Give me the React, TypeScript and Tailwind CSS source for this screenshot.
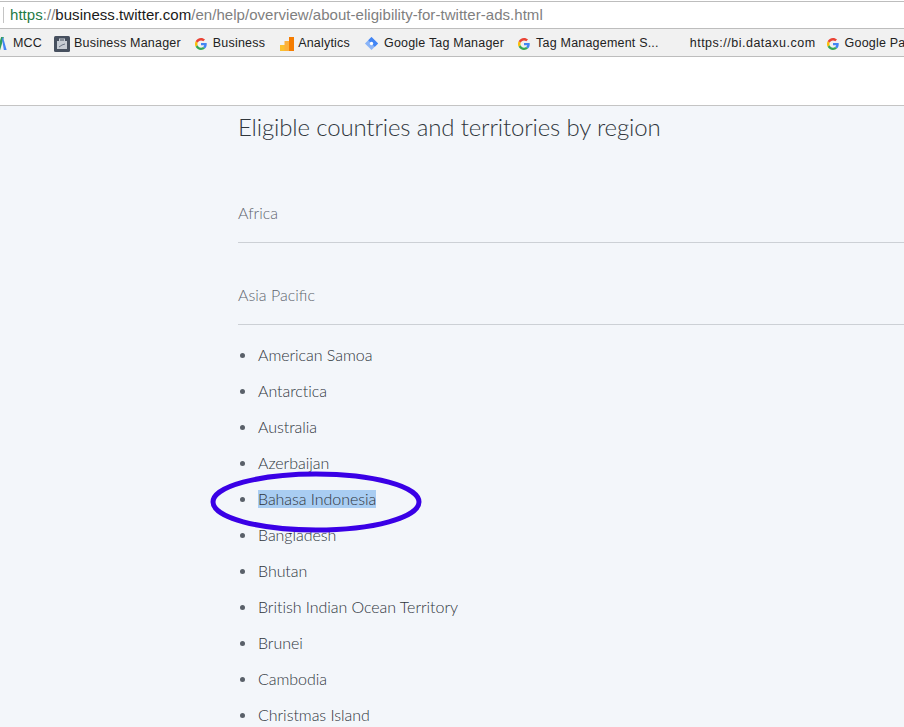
import React from "react";

const sans = "font-['Liberation_Sans',Arial,sans-serif]";

const countries = [
  "American Samoa",
  "Antarctica",
  "Australia",
  "Azerbaijan",
  "Bahasa Indonesia",
  "Bangladesh",
  "Bhutan",
  "British Indian Ocean Territory",
  "Brunei",
  "Cambodia",
  "Christmas Island",
];

function GoogleIcon() {
  return (
    <svg viewBox="0 0 48 48" className="w-[12px] h-[12px] shrink-0">
      <path fill="#EA4335" d="M24 9.5c3.5 0 6.700 1.200 9.200 3.600l6.900-6.900C35.900 2.400 30.500 0 24 0 14.600 0 6.500 5.400 2.600 13.200l8 6.200C12.500 13.600 17.800 9.500 24 9.500z" />
      <path fill="#4285F4" d="M46.900 24.500c0-1.600-.1-3.100-.4-4.500H24v9h12.900c-.6 3-2.200 5.500-4.700 7.200l7.700 6c4.500-4.200 7-10.300 7-17.700z" />
      <path fill="#FBBC05" d="M10.500 28.600c-.5-1.400-.8-3-.8-4.600s.3-3.200.8-4.600l-8-6.200C.9 16.500 0 20.100 0 24s.9 7.500 2.600 10.800l7.900-6.200z" />
      <path fill="#34A853" d="M24 48c6.500 0 11.900-2.100 15.900-5.800l-7.700-6c-2.100 1.400-4.900 2.300-8.200 2.300-6.200 0-11.500-4.200-13.400-9.800l-8 6.200C6.500 42.600 14.600 48 24 48z" />
    </svg>
  );
}

function Bookmark({ icon, label, className }: { icon?: React.ReactNode; label: string; className: string }) {
  return (
    <div className={`flex items-center shrink-0 ${className}`}>
      {icon}
      <span className="whitespace-nowrap">{label}</span>
    </div>
  );
}

export default function App() {
  return (
    <div className="w-[904px] h-[727px] overflow-hidden relative bg-white">
      {/* browser chrome */}
      <div className={`h-[28px] mt-px border-y border-[#bdbdbd] flex items-center pl-[3px] text-[15px] tracking-[0.04px] whitespace-nowrap ${sans}`}>
        <div className="w-px h-[16px] bg-[#c4c4c4] mr-[6px]" />
        <span className="text-[#1e7a45]">https</span>
        <span className="text-[#808080]">://</span>
        <span className="text-[#1a1a1a]">business.twitter.com</span>
        <span className="text-[#808080]">/en/help/overview/about-eligibility-for-twitter-ads.html</span>
      </div>
      <div className={`h-[28px] pt-[2px] bg-[#f1f1f1] border-b border-[#bdbdbd] flex items-center text-[12.500px] tracking-[0.2px] text-[#222] overflow-hidden ${sans}`}>
        <Bookmark
          className="-ml-[3px] gap-[6px]"
          label="MCC"
          icon={
            <svg viewBox="0 0 10 14" className="w-[10px] h-[13px]">
              <path d="M0 14 L4 0 H7 L3 14 Z" fill="#2f9e5b" />
              <path d="M5 2 L6 0 L10 14 H7 Z" fill="#4285f4" />
            </svg>
          }
        />
        <Bookmark
          className="ml-[12px] gap-[4px]"
          label="Business Manager"
          icon={
            <svg viewBox="0 0 16 16" className="w-[16px] h-[16px]">
              <rect width="16" height="16" rx="1.500" fill="#47505f" />
              <rect x="3" y="5" width="10" height="8" fill="#c7ccd4" />
              <rect x="5.500" y="3" width="5" height="2" fill="none" stroke="#c7ccd4" />
              <path d="M5 11 L8 9 L11 8" stroke="#6b7484" fill="none" />
            </svg>
          }
        />
        <Bookmark className="ml-[14px] gap-[6px]" label="Business" icon={<GoogleIcon />} />
        <Bookmark
          className="ml-[15px] gap-[4px]"
          label="Analytics"
          icon={
            <svg viewBox="0 0 14 14" className="w-[14px] h-[14px]">
              <rect x="0" y="8" width="5" height="6" fill="#fbc02d" />
              <rect x="4.500" y="4" width="5" height="10" fill="#fbb03b" />
              <rect x="9" y="0" width="5" height="14" fill="#f57c00" />
            </svg>
          }
        />
        <Bookmark
          className="ml-[14px] gap-[5px]"
          label="Google Tag Manager"
          icon={
            <svg viewBox="0 0 16 16" className="w-[15px] h-[15px]">
              <path d="M8 1 L15 8 L8 15 L1 8 Z" fill="#8ab4f8" />
              <path d="M8 1 L15 8 L11.500 11.500 L4.500 4.500 Z" fill="#4285f4" />
              <circle cx="8" cy="8" r="1.800" fill="#fff" />
            </svg>
          }
        />
        <Bookmark className="ml-[14px] gap-[6px]" label="Tag Management S..." icon={<GoogleIcon />} />
        <Bookmark className="ml-[31px] tracking-[0.5px]" label="https://bi.dataxu.com" />
        <Bookmark className="ml-[11px] gap-[6px]" label="Google Pa" icon={<GoogleIcon />} />
      </div>
      <div className="h-[49px] bg-white border-b border-[#c4c4c4]" />

      {/* page content */}
      <main className="h-[622px] bg-[#f3f6fa] pl-[238px] font-['Lato',sans-serif] overflow-hidden">
        <h1 className="pt-[5px] text-[24px] leading-[32px] font-light text-[#30363d] tracking-[-0.15px]">
          Eligible countries and territories by region
        </h1>
        <div className="mt-[57px] h-[43px] border-b border-[#ccd0d5] text-[16px] leading-[26px] font-light text-[#5f656e]">
          Africa
        </div>
        <div className="mt-[39px] h-[43px] border-b border-[#ccd0d5] text-[16px] leading-[26px] font-light text-[#5f656e]">
          Asia Pacific
        </div>
        <ul className="pt-[12px] text-[16px] font-light tracking-[-0.05px] text-[#2f353c]">
          {countries.map((c) => (
            <li key={c} className="flex items-center h-[36px]">
              <span className="w-[5px] h-[5px] rounded-full bg-[#596069] mr-[13px] ml-[2px] shrink-0" />
              {c === "Bahasa Indonesia" ? <span className="bg-[#a9cdf2] leading-[18px]">{c}</span> : c}
            </li>
          ))}
        </ul>
      </main>

      {/* hand-drawn annotation */}
      <svg className="absolute left-[208px] top-[468px] w-[216px] h-[68px]" viewBox="0 0 216 68">
        <ellipse cx="108" cy="34" rx="103" ry="28" fill="none" stroke="#3a00e6" strokeWidth="5" />
      </svg>
    </div>
  );
}
